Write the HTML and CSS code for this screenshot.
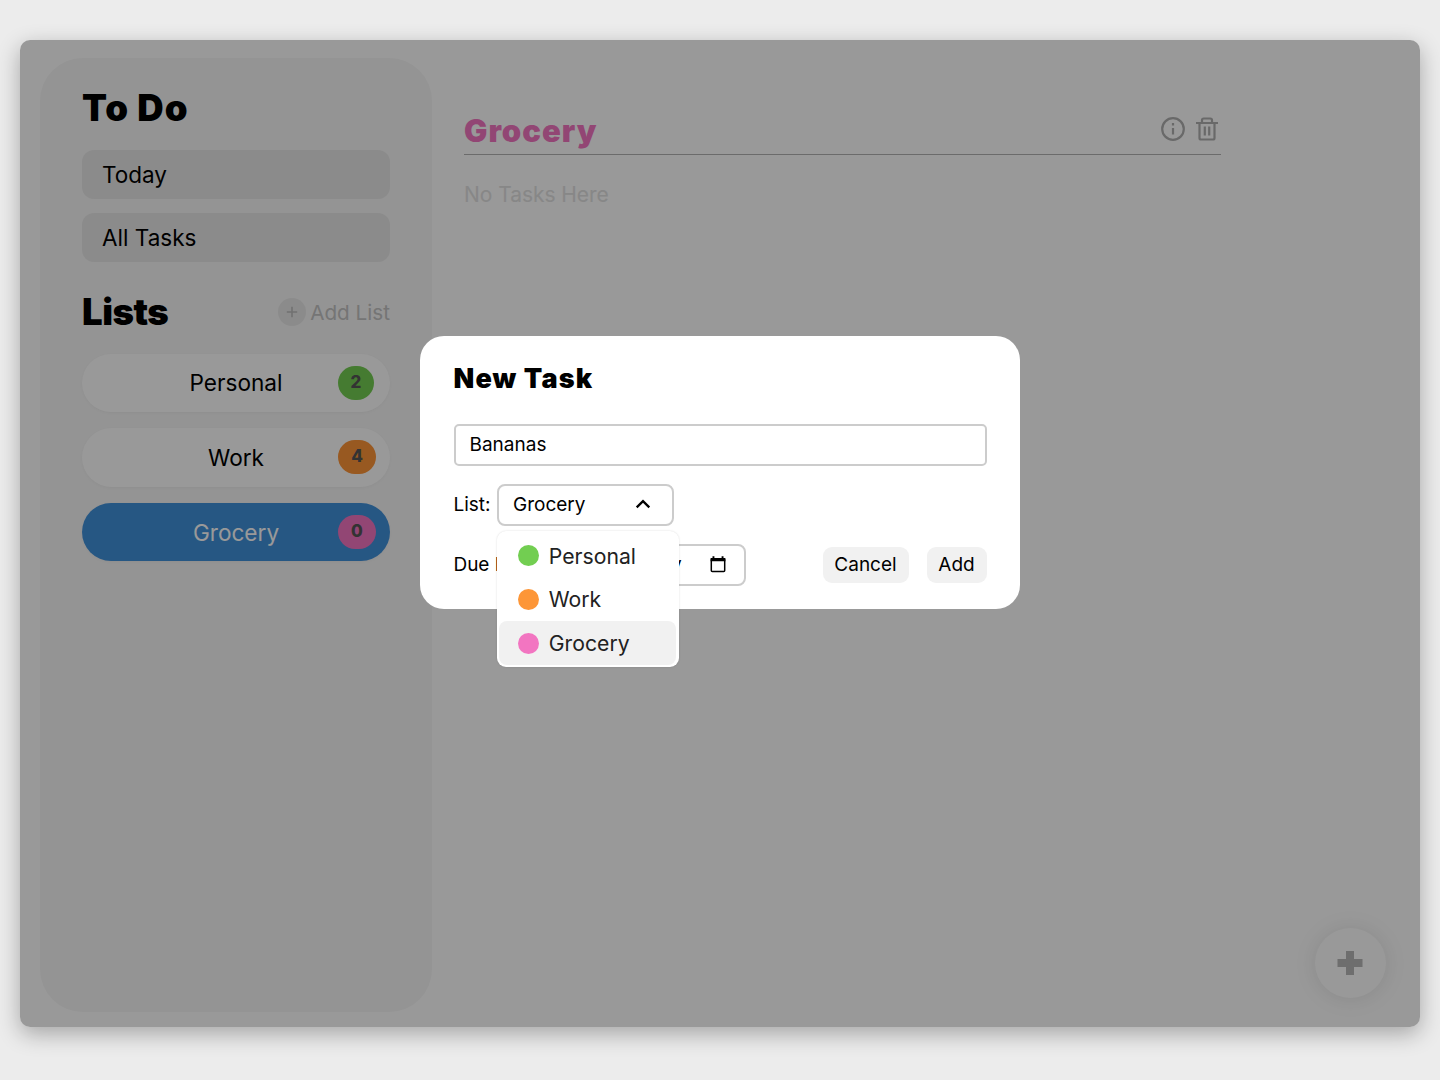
FILE: index.html
```html
<!DOCTYPE html>
<html lang="en">
<head>
<meta charset="utf-8">
<title>To Do</title>
<link rel="stylesheet" href="styles.css">
</head>
<body>
<div class="window">
  <aside class="sidebar">
    <h1 class="side-title todo">To Do</h1>
    <nav class="views">
      <button class="view">Today</button>
      <button class="view">All Tasks</button>
    </nav>
    <div class="lists-head">
      <h1 class="side-title lists-title">Lists</h1>
      <button class="add-list"><svg width="28" height="28" viewBox="0 0 28 28"><circle cx="14" cy="14" r="14" fill="#e8e8e8"/><path d="M14 8.800v10.400M8.800 14h10.400" stroke="#bcbcbc" stroke-width="1.600"/></svg><span>Add List</span></button>
    </div>
    <div class="lists">
      <button class="list"><span class="list-name">Personal</span><span class="badge green">2</span></button>
      <button class="list"><span class="list-name">Work</span><span class="badge orange">4</span></button>
      <button class="list active"><span class="list-name">Grocery</span><span class="badge pink">0</span></button>
    </div>
  </aside>
  <main class="content">
    <header class="content-head">
      <h2 class="list-heading">Grocery</h2>
      <div class="actions">
        <svg width="24" height="24" viewBox="0 0 24 24" fill="none" stroke="#b0b0b0" stroke-width="2.200"><circle cx="12" cy="12" r="10.800"/><path d="M12 11v6.500M12 6v2.500"/></svg>
        <svg width="22" height="24" viewBox="0 0 22 24" fill="none" stroke="#b0b0b0" stroke-width="2.200"><path d="M0 6h22M6 6V3.200Q6 1.500 7.700 1.500h6.600Q16 1.500 16 3.200V6M3.500 6v15q0 1.500 1.500 1.500h12q1.500 0 1.500-1.500V6M8.800 9.500v9M13.200 9.500v9"/></svg>
      </div>
    </header>
    <p class="empty">No Tasks Here</p>
  </main>
  <button class="fab"><svg width="26" height="26" viewBox="0 0 26 26"><path d="M9 1h8v8h8.500v8H17v8H9v-8H.500V9H9z" fill="#b7b7b7"/></svg></button>
  <div class="overlay">
    <form class="modal">
      <h2 class="modal-title">New Task</h2>
      <div class="field name-field">Bananas</div>
      <div class="row">
        <label class="label">List:</label>
        <div class="select">
          <div class="field select-box"><span>Grocery</span><svg width="16" height="10" viewBox="0 0 16 10"><path d="M1.700 8.400 8 2.200l6.300 6.200" fill="none" stroke="#000" stroke-width="2.300"/></svg></div>
          <div class="menu">
            <div class="option"><i class="dot dot-green"></i>Personal</div>
            <div class="option"><i class="dot dot-orange"></i>Work</div>
            <div class="option selected"><i class="dot dot-pink"></i>Grocery</div>
          </div>
        </div>
      </div>
      <div class="row">
        <label class="label due">Due Date:</label>
        <div class="field date"><span>mm/dd/yyyy</span><svg width="16" height="17" viewBox="0 0 16 17"><path d="M1.300 4h13.400v10.500q0 1-1 1H2.300q-1 0-1-1z" fill="none" stroke="#000" stroke-width="1.500"/><path d="M.600 2h14.800v3.200H.600zM2.500.300h1.900V3H2.500zM11.600.300h1.900V3h-1.900z"/></svg></div>
        <div class="buttons"><span class="btn cancel">Cancel</span><span class="btn add">Add</span></div>
      </div>
    </form>
  </div>
</div>
</body>
</html>
```
FILE: styles.css
```css
* { box-sizing: border-box; }
body {
  margin: 0;
  height: 1080px;
  padding: 40px 20px 53px;
  overflow: hidden;
  background: #ececec;
  font-family: Inter, sans-serif;
  color: #000;
}
button {
  border: 0;
  padding: 0;
  background: none;
  font: inherit;
  color: inherit;
}
h1, h2, p { margin: 0; }
svg { display: block; flex: none; }

.window {
  position: relative;
  display: flex;
  height: 987px;
  padding: 18px 20px 15px;
  border-radius: 10px;
  background: #fff;
  box-shadow: 0 7px 22px rgba(0, 0, 0, .3);
}
.sidebar {
  width: 392px;
  padding: 28px 42px;
  border-radius: 43px;
  background: #f7f7f7;
}
.side-title {
  font-size: 36.500px;
  line-height: 44px;
  font-weight: 900;
}
.todo { letter-spacing: 1px; }
.lists-title { letter-spacing: -.500px; }
.views {
  display: grid;
  gap: 14px;
  margin-top: 19.500px;
}
.view {
  height: 49px;
  padding-left: 20px;
  border-radius: 12px;
  background: #e8e8e8;
  font-size: 22.500px;
  text-align: left;
}
.lists-head {
  display: flex;
  align-items: center;
  justify-content: space-between;
  height: 44px;
  margin-top: 28px;
}
.add-list {
  display: flex;
  align-items: center;
  gap: 4px;
  padding-top: 1px;
  font-size: 20.700px;
  color: #c3c3c3;
}
.lists {
  display: grid;
  gap: 16.500px;
  margin-top: 20px;
}
.list {
  display: grid;
  grid-template-columns: 1fr auto 1fr;
  align-items: center;
  height: 58.300px;
  border-radius: 30px;
  background: #fff;
  box-shadow: 0 1px 3px rgba(0, 0, 0, .04);
  font-size: 22.600px;
}
.list-name { grid-column: 2; }
.badge {
  justify-self: end;
  width: 38px;
  height: 34px;
  margin-right: 14px;
  border-radius: 17px;
  font-size: 17px;
  line-height: 33px;
  font-weight: 800;
  color: #555;
}
.green { width: 36px; margin-right: 16px; background: #74ce52; }
.orange { background: #fd9437; }
.pink { background: #f375c1; }
.active { background: #4091db; color: #fff; }

.content {
  width: 757px;
  margin-left: 32px;
  padding-top: 47px;
}
.content-head {
  display: flex;
  align-items: center;
  justify-content: space-between;
  height: 50px;
  border-bottom: 1px solid #b2b2b2;
}
.list-heading {
  padding-top: 1px;
  font-size: 31px;
  font-weight: 900;
  letter-spacing: 1px;
  color: #f375c1;
}
.actions {
  display: flex;
  gap: 11px;
  padding: 0 3px 2px 0;
}
.empty {
  margin-top: 26px;
  font-size: 21px;
  line-height: 27px;
  letter-spacing: -.050px;
  color: #e1e1e1;
}
.fab {
  position: absolute;
  right: 34.500px;
  bottom: 29px;
  display: grid;
  place-items: center;
  width: 71px;
  height: 70px;
  border-radius: 50%;
  background: #fff;
  box-shadow: 0 1px 22px rgba(0, 0, 0, .1);
}

.overlay {
  position: absolute;
  inset: 0;
  display: flex;
  align-items: flex-start;
  justify-content: center;
  padding-top: 296px;
  border-radius: 10px;
  background: rgba(0, 0, 0, .4);
}
.modal {
  width: 600px;
  height: 272.500px;
  padding: 25px 33.500px;
  border-radius: 24px;
  background: #fff;
  font-size: 19px;
}
.modal-title {
  font-size: 27px;
  line-height: 36px;
  font-weight: 900;
  letter-spacing: 1.100px;
}
.field {
  display: flex;
  align-items: center;
  height: 42px;
  padding-bottom: 1px;
  border: 2px solid #ccc;
  border-radius: 8px;
  background: #fff;
}
.name-field {
  margin-top: 26.700px;
  padding-left: 14px;
  border-radius: 5px;
}
.row {
  display: flex;
  align-items: center;
  height: 42px;
  margin-top: 18px;
}
.label { width: 43.500px; padding-bottom: 1px; }
.due { width: 92px; white-space: nowrap; }
.select { position: relative; }
.select-box {
  justify-content: space-between;
  width: 177px;
  padding: 0 21px 1px 14px;
}
.menu {
  position: absolute;
  top: 47px;
  left: -.200px;
  width: 182px;
  padding: 3px 2.500px 2px;
  border-radius: 9px;
  background: #fff;
  box-shadow: 0 0 2px rgba(0, 0, 0, .15);
}
.option {
  display: flex;
  align-items: center;
  gap: 10px;
  height: 43.800px;
  padding-left: 18.500px;
  border-radius: 8px;
  font-size: 21.200px;
  color: #222;
}
.selected { background: #f1f1f1; }
.dot {
  width: 21px;
  height: 21px;
  border-radius: 50%;
}
.dot-green { background: #72ce51; }
.dot-orange { background: #fd9637; }
.dot-pink { background: #f275c1; }
.date {
  justify-content: space-between;
  width: 200px;
  padding: 0 18px 0 14px;
}
.due { letter-spacing: -.050px; }
.date span { letter-spacing: .800px; }
.buttons {
  display: flex;
  gap: 18px;
  margin-left: auto;
}
.btn {
  height: 36px;
  border-radius: 9px;
  background: #f1f1f1;
  line-height: 36px;
  text-align: center;
}
.cancel { width: 86px; }
.add { width: 60px; }
```
